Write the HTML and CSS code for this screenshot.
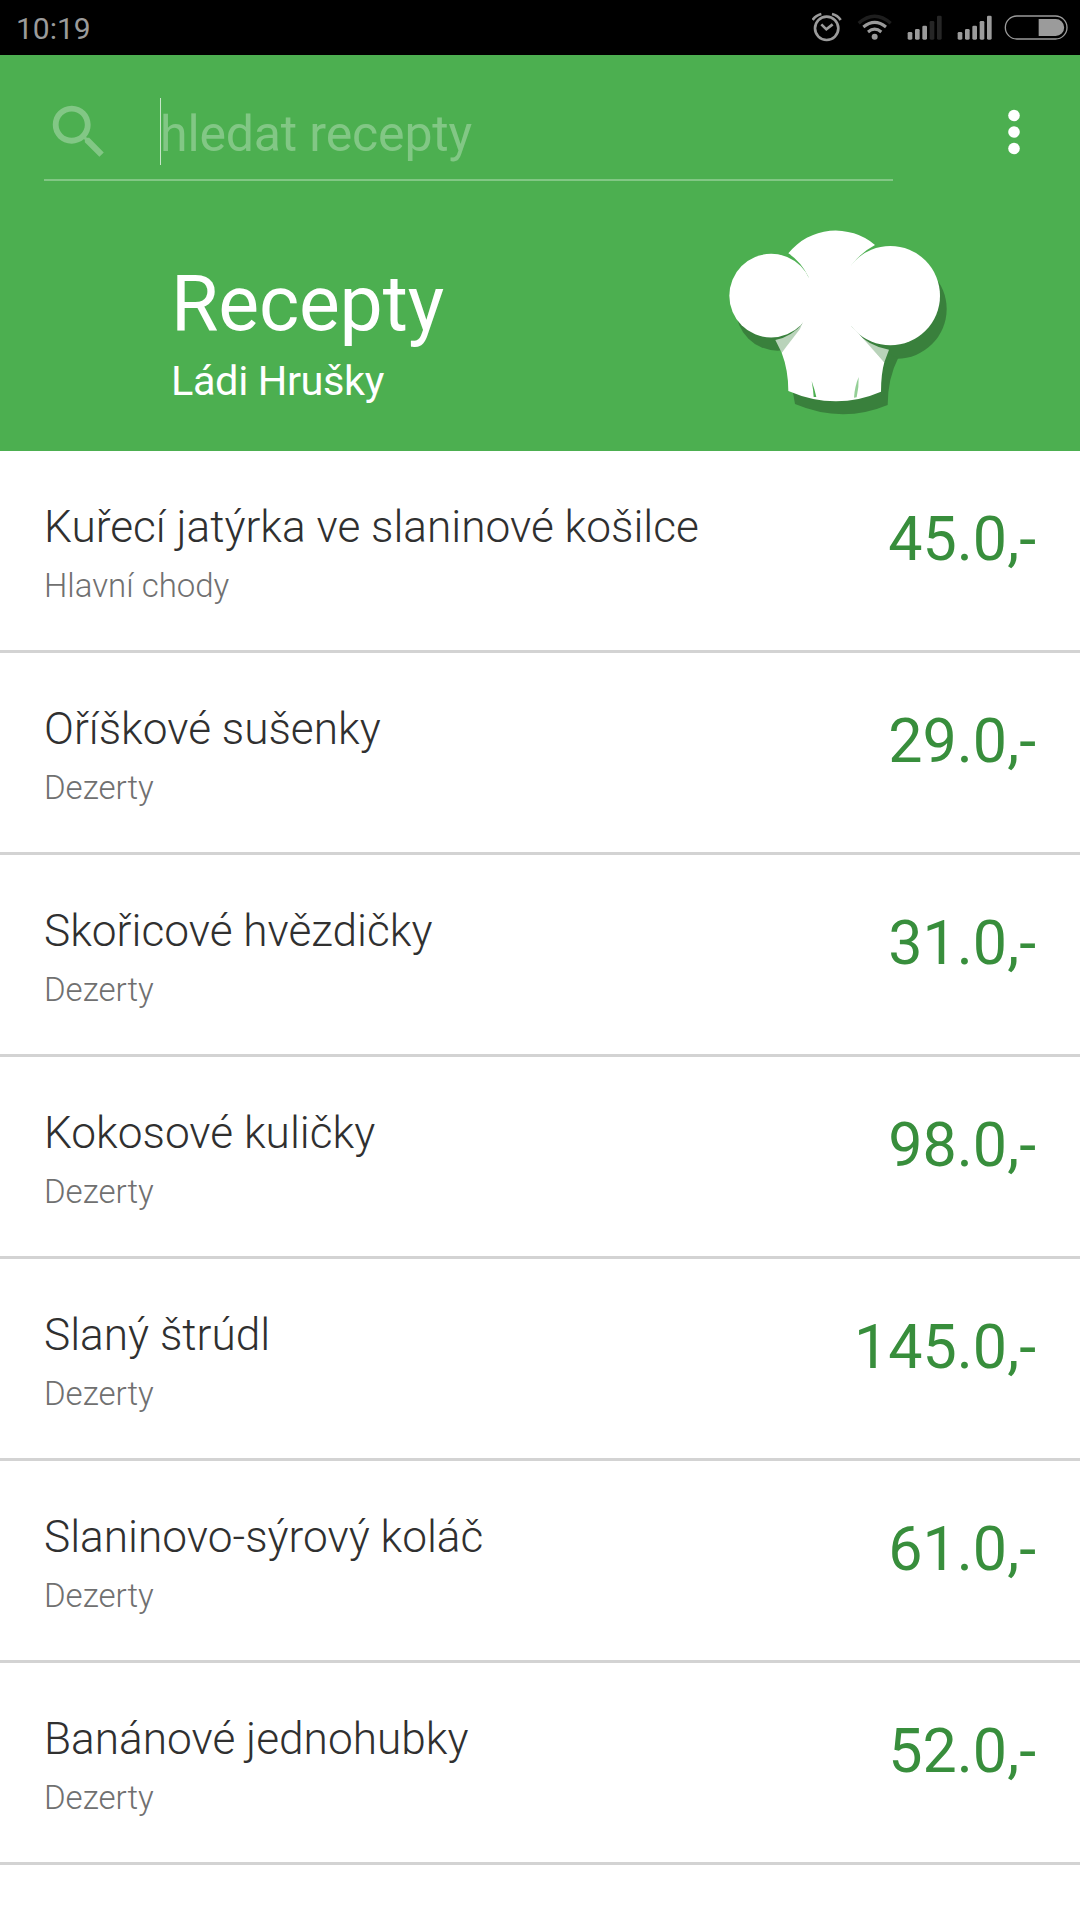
FILE: index.html
```html
<!DOCTYPE html>
<html lang="cs">
<head>
    <meta charset="UTF-8">
    <meta name="viewport" content="width=device-width, initial-scale=1.0">
    <title>Recepty Ládi Hrušky</title>
    <link rel="stylesheet" href="styles.css">
</head>
<body>
    <div class="status-bar">
        <span class="clock">10:19</span>
        <div class="status-icons">
            <svg width="30" height="55" viewBox="94 0 90 165" fill="none" stroke="#9b9b9b" stroke-width="8">
                <circle cx="138" cy="85" r="35"/>
                <path d="M122 73L137 88L156 73M96 60Q105 46 122 42M180 60Q171 46 154 42"/>
            </svg>
            <svg width="35" height="55" viewBox="229 0 105 165" fill="none" stroke="#9b9b9b" stroke-width="9">
                <path d="M234 70Q282 28 330 70" stroke="#1e1e1e" stroke-width="10"/>
                <path d="M248 81Q282 53 316 81M262 96Q282 79 302 96"/>
                <circle cx="282" cy="110" r="9" fill="#9b9b9b" stroke="none"/>
            </svg>
            <svg width="35" height="55" viewBox="379 0 105 165" fill="#9b9b9b">
                <rect x="381" y="96" width="14" height="23" rx="4"/>
                <rect x="403" y="87" width="14" height="32" rx="4"/>
                <rect x="425" y="77" width="14" height="42" rx="4"/>
                <rect x="447" y="63" width="14" height="56" rx="4" fill="#262626"/>
                <rect x="469" y="47" width="14" height="72" rx="4" fill="#262626"/>
            </svg>
            <svg width="35" height="55" viewBox="529 0 105 165" fill="#9b9b9b">
                <rect x="531" y="96" width="14" height="23" rx="4"/>
                <rect x="553" y="87" width="14" height="32" rx="4"/>
                <rect x="575" y="77" width="14" height="42" rx="4"/>
                <rect x="597" y="63" width="14" height="56" rx="4"/>
                <rect x="619" y="47" width="14" height="72" rx="4"/>
            </svg>
            <svg class="battery" width="64" height="55" viewBox="670 0 192 165">
                <rect x="674" y="48" width="185" height="69" rx="34.5" fill="none" stroke="#9b9b9b" stroke-width="4"/>
                <path d="M774 57H825A25.5 25.5 0 0 1 825 108H774Z" fill="#9b9b9b"/>
            </svg>
        </div>
    </div>

    <div class="header">
        <div class="toolbar">
            <div class="search-box">
                <svg class="search-icon" width="70" height="70" viewBox="0 0 24 24">
                    <path d="M15.5 14h-.79l-.28-.27C15.41 12.59 16 11.11 16 9.5 16 5.91 13.09 3 9.5 3S3 5.91 3 9.5 5.91 16 9.5 16c1.61 0 3.09-.59 4.23-1.57l.27.28v.79l5 4.99L20.49 19l-4.99-5zm-6 0C7.01 14 5 11.99 5 9.5S7.01 5 9.5 5 14 7.01 14 9.5 11.99 14 9.5 14z"/>
                </svg>
                <span class="cursor"></span>
                <span class="search-hint">hledat recepty</span>
            </div>
            <svg class="menu-icon" width="12" height="46" viewBox="0 0 12 46" fill="#fff">
                <circle cx="6" cy="6.5" r="5.8"/>
                <circle cx="6" cy="23" r="5.8"/>
                <circle cx="6" cy="39.5" r="5.8"/>
            </svg>
        </div>
        <div class="brand">
            <div class="brand-text">
                <h1>Recepty</h1>
                <h2>Ládi Hrušky</h2>
            </div>
            <svg class="hat" width="270" height="220" viewBox="0 0 810 660">
                <!-- shadow -->
                <g fill="#39803c">
                    <circle cx="233" cy="297" r="125"/>
                    <circle cx="591" cy="297" r="149"/>
                    <path d="M340 240L475 240L560 430L595 443Q563 505 563 585Q427 642 285 582L265 468Z"/>
                </g>
                <path d="M226 390Q275 380 310 338L300 370L245 428ZM465 362Q505 408 567 419L553 457Z" fill="#b9d3ba"/>
                <!-- hat -->
                <g fill="#fff">
                    <path d="M265 130A182 182 0 0 1 525 105Q482 128 455 165L455 350L475 370L553 457Q543 492 543 545Q407 604 265 543Q265 480 245 428L300 357L311 330L325 200Q302 154 265 130Z"/>
                    <circle cx="213.500" cy="257" r="125.500"/>
                    <circle cx="571" cy="257" r="149"/>
                </g>
                <path d="M335 513Q343 535 349 561L341 561Q340 540 335 513Z" fill="#4caf50"/>
                <path d="M476 501Q464 530 462 563L470 562Q477 532 476 501Z" fill="#94cf96"/>
            </svg>
        </div>
    </div>

    <div class="recipe-list">
        <div class="recipe">
            <div class="info">
                <p class="name">Kuřecí jatýrka ve slaninové košilce</p>
                <p class="category">Hlavní chody</p>
            </div>
            <p class="price">45.0,-</p>
        </div>
        <div class="recipe">
            <div class="info">
                <p class="name">Oříškové sušenky</p>
                <p class="category">Dezerty</p>
            </div>
            <p class="price">29.0,-</p>
        </div>
        <div class="recipe">
            <div class="info">
                <p class="name">Skořicové hvězdičky</p>
                <p class="category">Dezerty</p>
            </div>
            <p class="price">31.0,-</p>
        </div>
        <div class="recipe">
            <div class="info">
                <p class="name">Kokosové kuličky</p>
                <p class="category">Dezerty</p>
            </div>
            <p class="price">98.0,-</p>
        </div>
        <div class="recipe">
            <div class="info">
                <p class="name">Slaný štrúdl</p>
                <p class="category">Dezerty</p>
            </div>
            <p class="price">145.0,-</p>
        </div>
        <div class="recipe">
            <div class="info">
                <p class="name">Slaninovo-sýrový koláč</p>
                <p class="category">Dezerty</p>
            </div>
            <p class="price">61.0,-</p>
        </div>
        <div class="recipe">
            <div class="info">
                <p class="name">Banánové jednohubky</p>
                <p class="category">Dezerty</p>
            </div>
            <p class="price">52.0,-</p>
        </div>
    </div>
</body>
</html>
```
FILE: styles.css
```css
* {
    box-sizing: border-box;
    margin: 0;
    padding: 0;
}
body {
    font-family: Roboto, sans-serif;
    background: #fff;
    width: 1080px;
    height: 1920px;
    overflow: hidden;
}
svg {
    display: block;
    flex-shrink: 0;
}

/* status bar */
.status-bar {
    display: flex;
    justify-content: space-between;
    height: 55px;
    padding: 0 12px 0 16px;
    background: #000;
}
.clock {
    font-size: 30px;
    line-height: 57px;
    color: #9b9b9b;
}
.status-icons {
    display: flex;
    gap: 15px;
}
.battery {
    margin-left: -3px;
}

/* header */
.header {
    height: 396px;
    background: #4caf50;
}
.toolbar {
    display: flex;
    justify-content: space-between;
    height: 155px;
    padding: 0 60px 0 44px;
}
.search-box {
    display: flex;
    align-items: flex-start;
    width: 849px;
    height: 126px;
    border-bottom: 2px solid #82c785;
}
.search-icon {
    margin-top: 42px;
    fill: #82c785;
}
.cursor {
    width: 1px;
    height: 67px;
    margin: 43px -1px 0 46px;
    background: #c8e6c9;
}
.search-hint {
    margin-top: 48px;
    font-size: 50px;
    letter-spacing: -0.15px;
    line-height: 62px;
    color: #82c785;
}
.menu-icon {
    margin-top: 54px;
}
.brand {
    display: flex;
    justify-content: space-between;
    padding: 0 110px 0 171px;
}
.brand-text {
    padding-top: 49px;
    color: #fff;
}
h1 {
    font-size: 77px;
    font-weight: 400;
    letter-spacing: -0.2px;
    line-height: 90px;
}
h2 {
    font-size: 41.5px;
    font-weight: 400;
    letter-spacing: -0.4px;
    line-height: 50px;
    margin-top: 7px;
}

/* list */
.recipe {
    display: flex;
    justify-content: space-between;
    height: 202px;
    padding: 46px 43px 0 44px;
    border-bottom: 3px solid #d3d3d3;
}
.name {
    font-size: 44.2px;
    font-weight: 300;
    line-height: 60px;
    color: #303030;
}
.category {
    margin-top: 9px;
    font-size: 33px;
    font-weight: 300;
    line-height: 40px;
    color: #707070;
}
.price {
    margin-top: 7px;
    margin-right: 1px;
    font-size: 61px;
    line-height: 70px;
    color: #388e3c;
}
```
